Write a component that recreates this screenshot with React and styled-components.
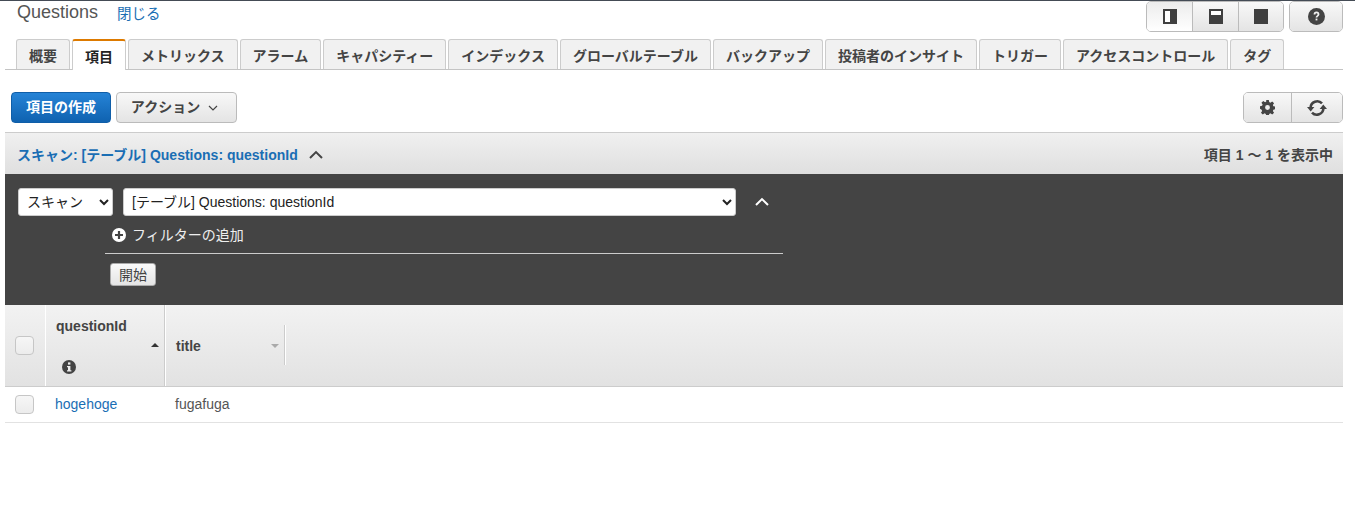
import React from "react";
import styled, { createGlobalStyle } from "styled-components";

const Global = createGlobalStyle`
  html, body { margin: 0; padding: 0; background: #fff; }
  body { font-family: "Liberation Sans", "Noto Sans CJK JP", sans-serif; color: #444; font-size: 14px; }
  * { box-sizing: border-box; }
`;

const Page = styled.div`
  width: 1355px;
  height: 522px;
  border-top: 1px solid #444b55;
  padding: 0 12px 0 5px;
  overflow: hidden;
`;
const TitleBar = styled.div`
  height: 38px;
  display: flex;
  align-items: flex-start;
  justify-content: space-between;
`;
const TitleLeft = styled.div`
  display: flex;
  align-items: flex-start;
  padding: 1px 0 0 12px;
  gap: 19px;
`;
const Title = styled.span`
  font-size: 18px;
  line-height: 21px;
  color: #555;
`;
const CloseLink = styled.a`
  color: #1a6eb4;
  font-size: 14.5px;
  line-height: 21px;
  margin-top: 2px;
  text-decoration: none;
`;
const Link = styled.a`
  color: #1a6eb4;
  font-size: 14px;
  text-decoration: none;
`;
const TitleRight = styled.div`
  display: flex;
  gap: 5px;
`;
const ButtonGroup = styled.div`
  display: flex;
  height: 31px;
  border: 1px solid #bbb;
  border-radius: 5px;
  overflow: hidden;
`;
const IconButton = styled.button`
  width: ${(p) => p.$w}px;
  padding: 0;
  border: 0;
  border-left: ${(p) => (p.$first ? "0" : "1px solid #bbb")};
  background: ${(p) =>
    p.$active ? "linear-gradient(#ececec,#fff)" : "linear-gradient(#f8f8f8,#e4e4e4)"};
  display: flex;
  align-items: center;
  justify-content: center;
`;
const Tabs = styled.div`
  display: flex;
  gap: 2px;
  height: 31px;
  padding-left: 11px;
  border-bottom: 1px solid #c4c4c4;
`;
const Tab = styled.div`
  height: ${(p) => (p.$active ? "31px" : "30px")};
  padding: 0 12px;
  display: flex;
  align-items: center;
  font-size: 14px;
  font-weight: 700;
  white-space: nowrap;
  border: 1px solid #ccc;
  border-bottom: 0;
  border-radius: 3px 3px 0 0;
  color: ${(p) => (p.$active ? "#222" : "#444")};
  background: ${(p) => (p.$active ? "#fff" : "#f1f1f1")};
  ${(p) => p.$active && "border-top: 2px solid #dd7a00;"}
`;
const Toolbar = styled.div`
  display: flex;
  justify-content: space-between;
  align-items: center;
  height: 31px;
  margin-top: 22px;
  padding-left: 6px;
`;
const ToolLeft = styled.div`
  display: flex;
  gap: 5px;
`;
const Primary = styled.button`
  width: 100px;
  height: 31px;
  border: 1px solid #0f5ea8;
  border-radius: 4px;
  background: linear-gradient(#2583d6, #0f62b0);
  color: #fff;
  font: 700 14px "Liberation Sans", "Noto Sans CJK JP", sans-serif;
  padding: 0 0 3px;
`;
const Secondary = styled.button`
  width: 121px;
  height: 31px;
  border: 1px solid #bbb;
  border-radius: 4px;
  background: linear-gradient(#f8f8f8, #e4e4e4);
  color: #444;
  font: 700 14px "Liberation Sans", "Noto Sans CJK JP", sans-serif;
  padding: 0 4px 3px 0;
  display: flex;
  align-items: center;
  justify-content: center;
  gap: 8px;
`;
const CaretIcon = styled.svg`
  margin-top: 3px;
`;
const ScanHeader = styled.div`
  margin-top: 9px;
  height: 42px;
  border-top: 1px solid #ccc;
  background: linear-gradient(#f0f0f0, #dfdfdf);
  display: flex;
  align-items: center;
  justify-content: space-between;
  padding: 0 10px 0 12px;
`;
const ScanTitle = styled.div`
  display: flex;
  align-items: center;
  gap: 11px;
  color: #1a6eb4;
  font-weight: 700;
  font-size: 14px;
`;
const ChevronSlot = styled.span`
  display: flex;
  margin: ${(p) => p.$margin};
`;
const Count = styled.div`
  font-size: 14px;
  font-weight: 700;
  color: #444;
`;
const Panel = styled.div`
  height: 131px;
  background: #444;
  padding-top: 14px;
`;
const SelectRow = styled.div`
  display: flex;
  align-items: center;
  padding-left: 13px;
  gap: 10px;
`;
const Select = styled.select`
  width: ${(p) => p.$w}px;
  height: 28px;
  border: 1px solid #ccc;
  border-radius: 3px;
  background: #fff;
  color: #222;
  font: 14px "Liberation Sans", "Noto Sans CJK JP", sans-serif;
  padding-left: 4px;
`;
const FilterRow = styled.div`
  display: flex;
  align-items: center;
  gap: 6px;
  color: #eee;
  font-size: 14px;
  height: 20px;
  margin: 8px 0 0 107px;
`;
const PlusSlot = styled.span`
  display: flex;
  margin-top: 2px;
`;
const Divider = styled.div`
  width: 678px;
  margin: 9px 0 0 100px;
  border-top: 1px solid #ccc;
`;
const Start = styled.button`
  display: block;
  width: 46px;
  height: 23px;
  margin: 9px 0 0 105px;
  padding: 0 0 3px;
  border: 1px solid #aaa;
  border-radius: 3px;
  background: linear-gradient(#fafafa, #e4e4e4);
  color: #444;
  font: 14px "Liberation Sans", "Noto Sans CJK JP", sans-serif;
`;
const HeadRow = styled.div`
  height: 82px;
  display: flex;
  background: linear-gradient(#f2f2f2, #e2e2e2);
  border-bottom: 1px solid #ccc;
`;
const CheckCell = styled.div`
  width: ${(p) => p.$w}px;
  flex: none;
  display: flex;
  align-items: center;
  padding-left: 10px;
`;
const Check = styled.span`
  display: block;
  width: 19px;
  height: 19px;
  border: 1px solid #c6c6c6;
  border-radius: 4px;
  background: linear-gradient(#f6f6f6, #ececec);
`;
const SortCell = styled.div`
  position: relative;
  width: ${(p) => p.$w}px;
  border-left: 1px solid #fff;
  border-right: ${(p) => (p.$last ? "0" : "1px solid #ccc")};
  font-weight: 700;
  color: #444;
  font-size: 14px;
`;
const SortLabel = styled.div`
  position: absolute;
  left: 10px;
  top: ${(p) => p.$top}px;
`;
const Caret = styled.span`
  position: absolute;
  right: ${(p) => p.$right}px;
  top: ${(p) => p.$top}px;
  width: 0;
  height: 0;
  border-left: 4px solid transparent;
  border-right: 4px solid transparent;
  ${(p) => (p.$up ? "border-bottom: 4px solid #333;" : "border-top: 4px solid #aaa;")}
`;
const InfoIcon = styled.span`
  position: absolute;
  left: 16px;
  top: 55px;
  display: flex;
`;
const TitleSep = styled.span`
  width: 1px;
  height: 40px;
  margin-top: 20px;
  background: #ccc;
  box-shadow: 1px 0 0 #fff;
`;
const BodyRow = styled.div`
  height: 36px;
  display: flex;
  align-items: center;
  border-bottom: 1px solid #e2e2e2;
`;
const BodyCell = styled.div`
  width: ${(p) => p.$w}px;
  font-size: 14px;
  color: #555;
  margin-top: -2px;
`;

const Chevron = ({ color = "#444", w = 14 }) => (
  <svg width={w} height={w * 0.65} viewBox="0 0 14 9" fill="none">
    <path d="M1 8 L7 2 L13 8" stroke={color} strokeWidth="2" />
  </svg>
);

const Plus = () => (
  <svg width="14" height="14" viewBox="0 0 14 14">
    <circle cx="7" cy="7" r="7" fill="#fff" />
    <path d="M3 7h8M7 3v8" stroke="#444" strokeWidth="2.2" />
  </svg>
);

const Info = () => (
  <svg width="14" height="14" viewBox="0 0 14 14">
    <circle cx="7" cy="7" r="7" fill="#444" />
    <rect x="6" y="2.4" width="2.4" height="2.2" fill="#eee" />
    <path d="M5 6h3.4v4.2h1v1.3H5v-1.3h1V7.3H5z" fill="#eee" />
  </svg>
);

const Gear = () => (
  <svg width="15" height="15" viewBox="0 0 16 16">
    <path
      fill="#444"
      fillRule="evenodd"
      d="M6.6 0h2.8l.4 2.2 1.3.6 1.9-1.3 2 2-1.3 1.9.6 1.3 2.2.4v2.8l-2.2.4-.6 1.3 1.3 1.9-2 2-1.9-1.3-1.3.6-.4 2.2H6.6l-.4-2.2-1.3-.6-1.9 1.3-2-2 1.3-1.9-.6-1.3L0 9.4V6.6l2.2-.4.6-1.3L1.5 3l2-2 1.9 1.3 1.3-.6zM8 5.4a2.6 2.6 0 1 0 0 5.2 2.6 2.6 0 0 0 0-5.2z"
    />
  </svg>
);

const Refresh = () => (
  <svg width="20" height="20" viewBox="0 0 20 20" fill="none">
    <path d="M3.6 9.5A6.6 6.6 0 0 1 15 5.4" stroke="#444" strokeWidth="2.6" />
    <path d="M16.4 10.5A6.6 6.6 0 0 1 5 14.6" stroke="#444" strokeWidth="2.6" />
    <path d="M0 9h7.4L3.7 13.4z" fill="#444" />
    <path d="M20 11h-7.4l3.7-4.4z" fill="#444" />
  </svg>
);

const Help = () => (
  <svg width="17" height="17" viewBox="0 0 17 17">
    <circle cx="8.5" cy="8.5" r="8.5" fill="#444" />
    <path d="M5.6 6.4a2.9 2.9 0 0 1 5.8 0c0 1.8-2.1 1.9-2.1 3.2H7.6c0-2.2 2-2.2 2-3.2a1.1 1.1 0 0 0-2.2 0z" fill="#f0f0f0" />
    <rect x="7.6" y="10.6" width="1.8" height="1.8" fill="#f0f0f0" />
  </svg>
);

const PaneIcon = ({ kind }) => (
  <svg width="14" height="15" viewBox="0 0 14 15">
    <rect width="14" height="15" fill="#3f3f3f" />
    {kind === "left" && <rect x="2" y="2" width="5" height="11" fill="#fff" />}
    {kind === "bottom" && <rect x="2" y="2" width="10" height="4" fill="#fff" />}
  </svg>
);

const tabs = [
  "概要", "項目", "メトリックス", "アラーム", "キャパシティー", "インデックス",
  "グローバルテーブル", "バックアップ", "投稿者のインサイト", "トリガー",
  "アクセスコントロール", "タグ",
];

export default function App() {
  return (
    <Page>
      <Global />
      <TitleBar>
        <TitleLeft>
          <Title>Questions</Title>
          <CloseLink href="#">閉じる</CloseLink>
        </TitleLeft>
        <TitleRight>
          <ButtonGroup>
            <IconButton $w={45} $first $active><PaneIcon kind="left" /></IconButton>
            <IconButton $w={46}><PaneIcon kind="bottom" /></IconButton>
            <IconButton $w={45}><PaneIcon kind="full" /></IconButton>
          </ButtonGroup>
          <ButtonGroup>
            <IconButton $w={52} $first><Help /></IconButton>
          </ButtonGroup>
        </TitleRight>
      </TitleBar>
      <Tabs>
        {tabs.map((t) => (
          <Tab key={t} $active={t === "項目"}>{t}</Tab>
        ))}
      </Tabs>
      <Toolbar>
        <ToolLeft>
          <Primary>項目の作成</Primary>
          <Secondary>
            アクション
            <CaretIcon width="10" height="6" viewBox="0 0 10 6" fill="none">
              <path d="M1 1l4 4 4-4" stroke="#444" strokeWidth="1.2" />
            </CaretIcon>
          </Secondary>
        </ToolLeft>
        <ButtonGroup>
          <IconButton $w={47} $first><Gear /></IconButton>
          <IconButton $w={51}><Refresh /></IconButton>
        </ButtonGroup>
      </Toolbar>
      <ScanHeader>
        <ScanTitle>
          スキャン: [テーブル] Questions: questionId
          <ChevronSlot $margin="2px 0 0 0"><Chevron /></ChevronSlot>
        </ScanTitle>
        <Count>項目 1 〜 1 を表示中</Count>
      </ScanHeader>
      <Panel>
        <SelectRow>
          <Select $w={95} defaultValue="scan"><option value="scan">スキャン</option></Select>
          <Select $w={613} defaultValue="t"><option value="t">[テーブル] Questions: questionId</option></Select>
          <ChevronSlot $margin="0 0 0 9px"><Chevron color="#fff" /></ChevronSlot>
        </SelectRow>
        <FilterRow><PlusSlot><Plus /></PlusSlot>フィルターの追加</FilterRow>
        <Divider />
        <Start>開始</Start>
      </Panel>
      <HeadRow>
        <CheckCell $w={40}><Check /></CheckCell>
        <SortCell $w={120}>
          <SortLabel $top={13}>questionId</SortLabel>
          <Caret $up $right={5} $top={38} />
          <InfoIcon><Info /></InfoIcon>
        </SortCell>
        <SortCell $w={119} $last>
          <SortLabel $top={33}>title</SortLabel>
          <Caret $right={5} $top={39} />
        </SortCell>
        <TitleSep />
      </HeadRow>
      <BodyRow>
        <CheckCell $w={50}><Check /></CheckCell>
        <BodyCell $w={120}><Link href="#">hogehoge</Link></BodyCell>
        <BodyCell $w={120}>fugafuga</BodyCell>
      </BodyRow>
    </Page>
  );
}
